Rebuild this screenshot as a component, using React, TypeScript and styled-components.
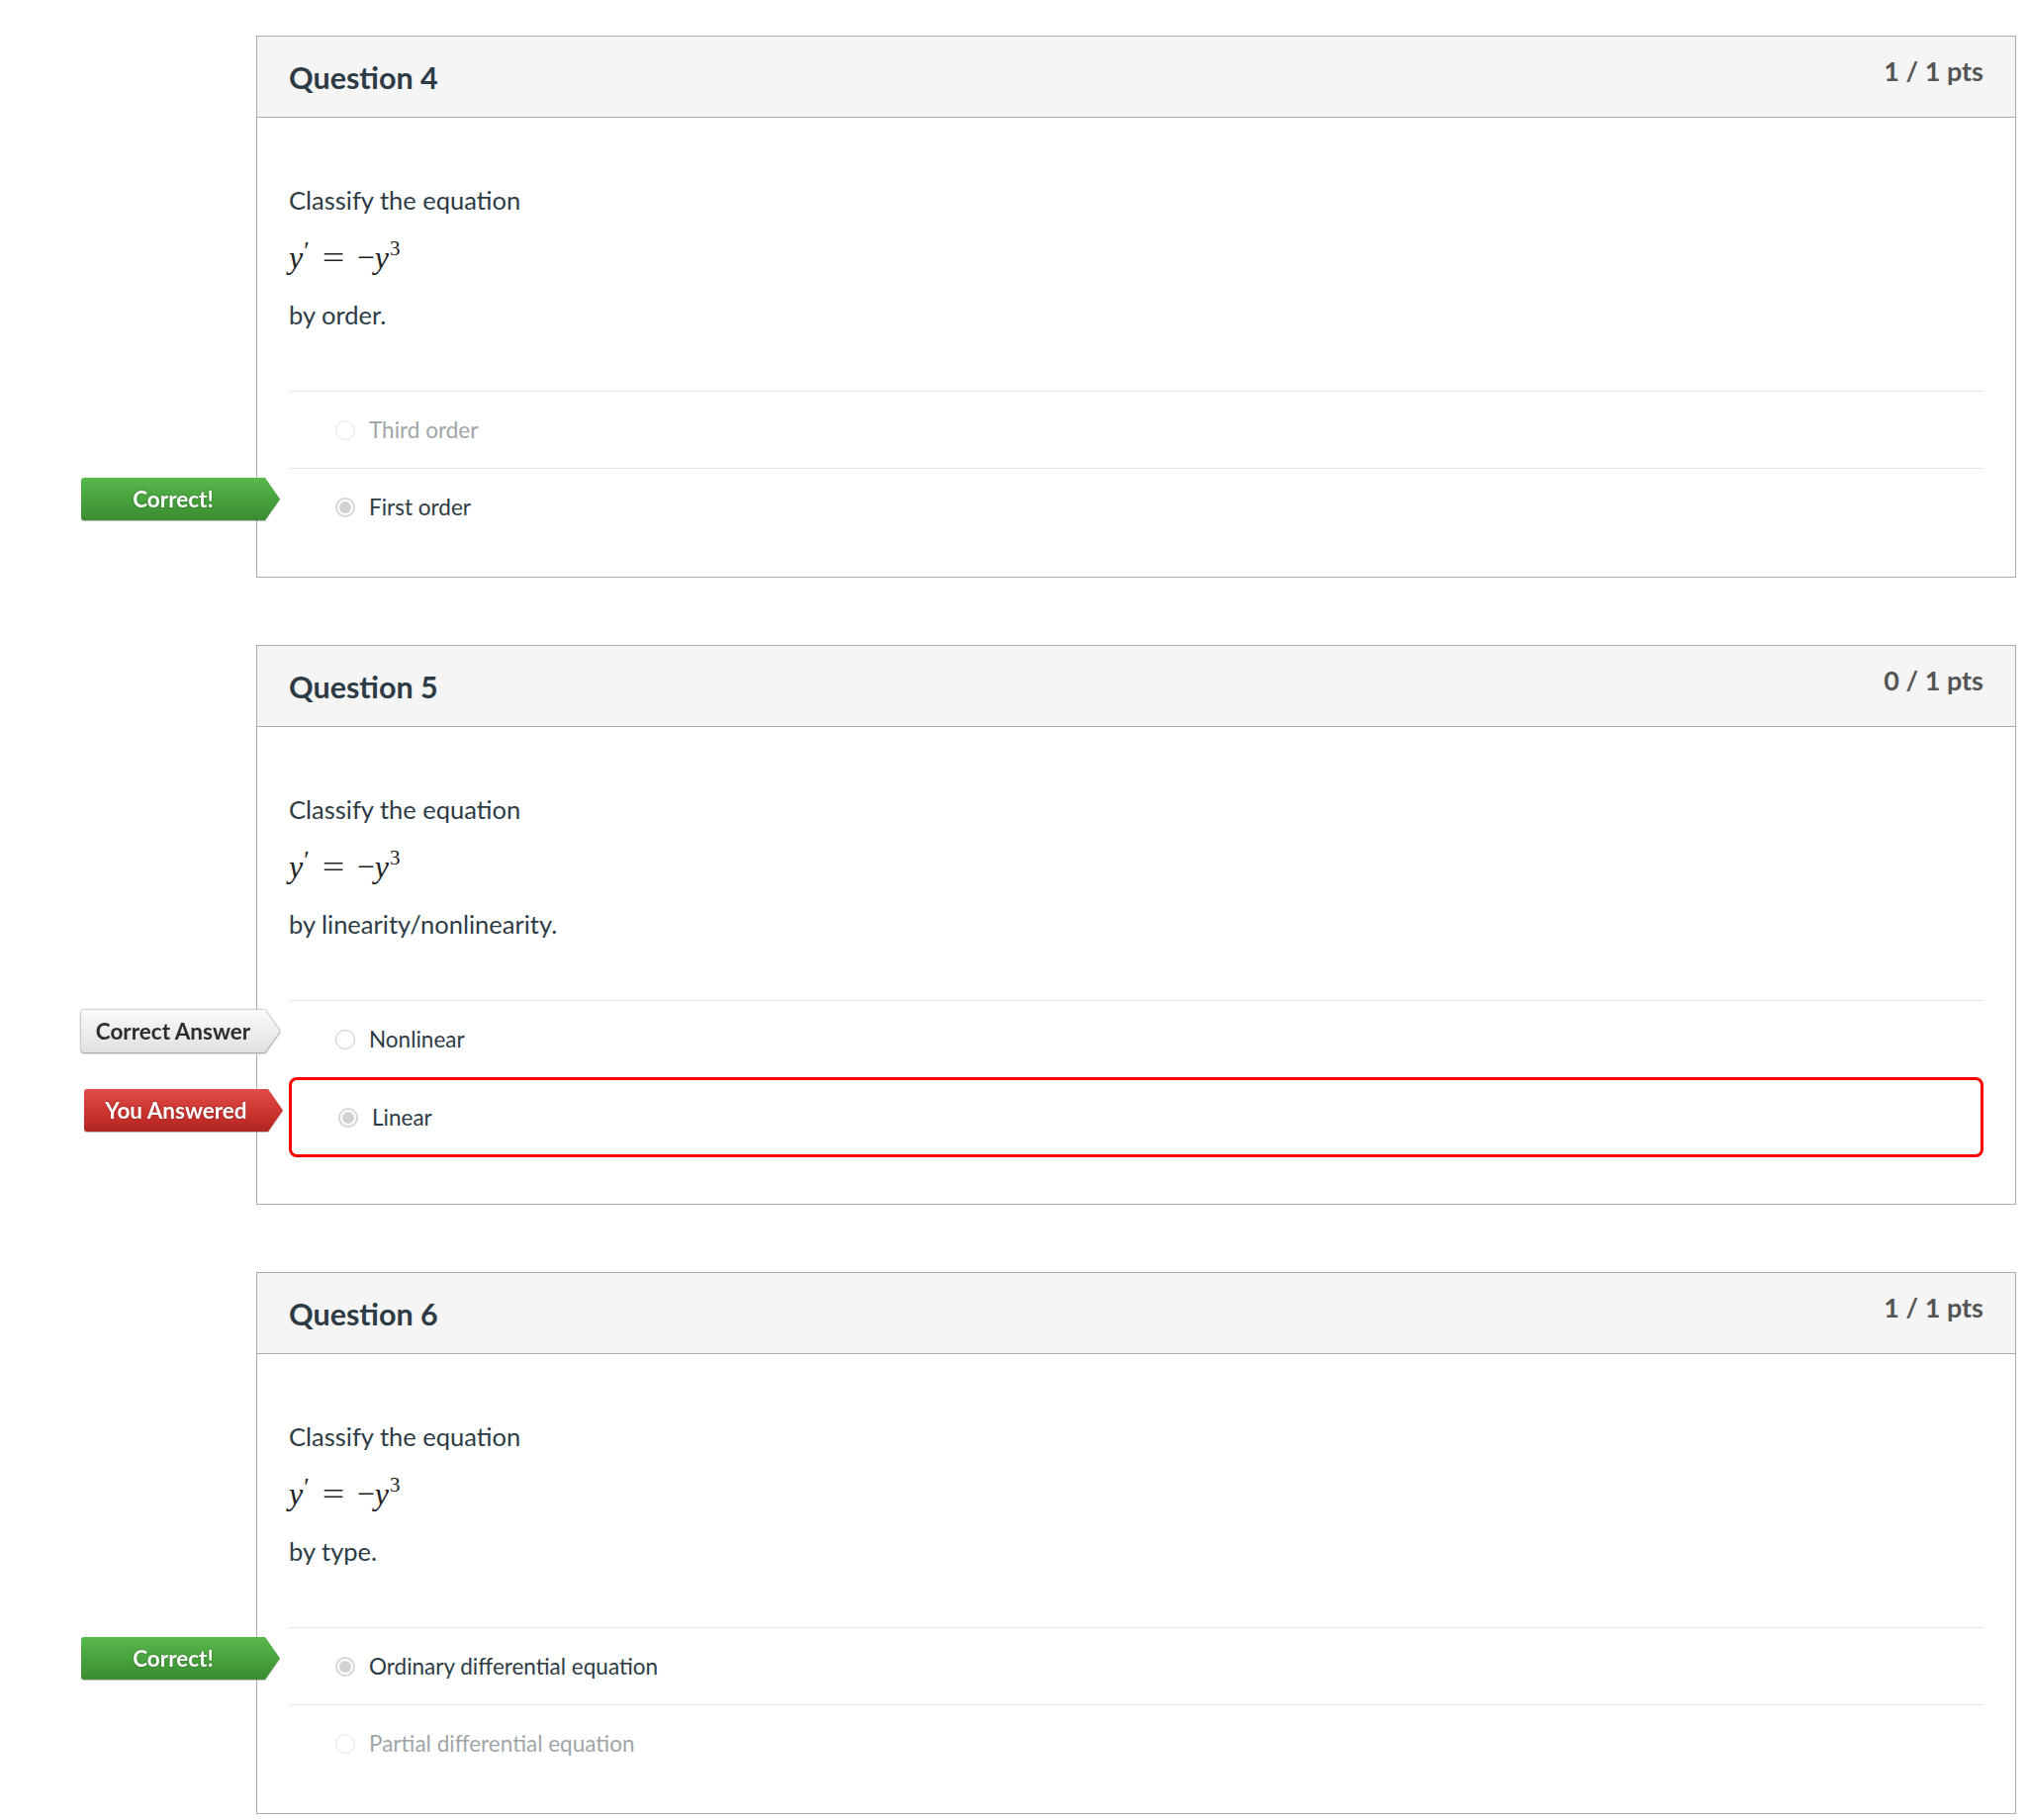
import React from 'react';
import styled, { createGlobalStyle, css } from 'styled-components';

type Answer = {
  text: string;
  state: 'correct' | 'answered' | 'missed' | 'plain';
  selected?: boolean;
  faded?: boolean;
};

type Question = {
  number: number;
  points: string;
  criterion: string;
  answers: Answer[];
};

const questions: Question[] = [
  {
    number: 4,
    points: '1 / 1 pts',
    criterion: 'by order.',
    answers: [
      { text: 'Third order', state: 'plain', faded: true },
      { text: 'First order', state: 'correct', selected: true },
    ],
  },
  {
    number: 5,
    points: '0 / 1 pts',
    criterion: 'by linearity/nonlinearity.',
    answers: [
      { text: 'Nonlinear', state: 'missed' },
      { text: 'Linear', state: 'answered', selected: true },
    ],
  },
  {
    number: 6,
    points: '1 / 1 pts',
    criterion: 'by type.',
    answers: [
      { text: 'Ordinary differential equation', state: 'correct', selected: true },
      { text: 'Partial differential equation', state: 'plain', faded: true },
    ],
  },
];

const badgeLabel = {
  correct: 'Correct!',
  missed: 'Correct Answer',
  answered: 'You Answered',
};

const App = () => {
  return (
    <>
      <GlobalStyle />
      <Page>
        {questions.map((q) => (
          <Card key={q.number}>
            <Header>
              <Title>Question {q.number}</Title>
              <Points>{q.points}</Points>
            </Header>
            <Body>
              <Text>Classify the equation</Text>
              <MathLine>
                <i>y</i>
                <Prime>′</Prime>
                <Op>=</Op>−<i>y</i>
                <Sup>3</Sup>
              </MathLine>
              <Text>{q.criterion}</Text>
              <Answers>
                {q.answers.map((a) => (
                  <Row key={a.text} $wrong={a.state === 'answered'}>
                    {a.state !== 'plain' && (
                      <BadgeWrap $kind={a.state}>
                        <Badge $kind={a.state}>{badgeLabel[a.state]}</Badge>
                      </BadgeWrap>
                    )}
                    <Radio $selected={!!a.selected} $faded={!!a.faded} />
                    <AnswerText $faded={!!a.faded}>{a.text}</AnswerText>
                  </Row>
                ))}
              </Answers>
            </Body>
          </Card>
        ))}
      </Page>
    </>
  );
};

export default App;

const GlobalStyle = createGlobalStyle`
  body {
    margin: 0;
    background: #fff;
    font-family: Lato, "Open Sans", sans-serif;
    color: #2d3b45;
  }
`;

const Page = styled.main`
  display: flex;
  flex-direction: column;
  gap: 68px;
  padding: 36px 0 6px 259px;
`;

const Card = styled.section`
  width: 1779px;
  box-sizing: border-box;
  border: 1px solid #acacac;
  background: #fff;
`;

const Header = styled.header`
  height: 81px;
  display: flex;
  align-items: center;
  justify-content: space-between;
  padding: 0 32px;
  background: #f5f5f5;
  border-bottom: 1px solid #acacac;
`;

const Title = styled.h2`
  margin: 1px 0 0;
  font-size: 30.5px;
  font-weight: 700;
  color: #2d3b45;
`;

const Points = styled.div`
  margin-top: -13px;
  font-size: 27px;
  font-weight: 700;
  color: #555;
`;

const Body = styled.div`
  padding: 64px 32px 32px;
`;

const Text = styled.p`
  margin: 0 0 20px;
  font-size: 25.5px;
  line-height: 38px;
  color: #2d3b45;
  &:last-of-type {
    margin-bottom: 0;
  }
`;

const MathLine = styled.div`
  margin: 0 0 20px;
  height: 38px;
  line-height: 38px;
  font-family: "Liberation Serif", "DejaVu Serif", serif;
  font-size: 32px;
  color: #222;
  white-space: nowrap;
`;

const Prime = styled.span`
  font-size: 25px;
  position: relative;
  top: -9px;
  margin-left: 1px;
`;

const Op = styled.span`
  margin: 0 15px 0 15px;
  display: inline-block;
  transform: scaleX(1.25);
`;

const Sup = styled.sup`
  font-size: 21px;
  margin-left: 1px;
  vertical-align: 0;
  position: relative;
  top: -13px;
`;

const Answers = styled.div`
  margin-top: 58px;
`;

const Row = styled.div<{ $wrong: boolean }>`
  position: relative;
  display: flex;
  align-items: center;
  box-sizing: border-box;
  height: 78px;
  padding-left: 47px;
  border-top: 1px solid #e6e6e6;
  ${(p) =>
    p.$wrong &&
    css`
      height: 81px;
      margin-bottom: 15px;
      border: 3px solid #f00;
      border-radius: 8px;
    `}
`;

const badgeColors = {
  correct: css`
    background: linear-gradient(#58b84d, #429a38 70%, #3b8b33);
    color: #fff;
    text-shadow: 0 0 2px rgba(0, 0, 0, 0.4);
  `,
  missed: css`
    background: linear-gradient(#fbfbfb, #e0e0e0);
    color: #2d2d2d;
  `,
  answered: css`
    background: linear-gradient(#e24b46, #c52f2a 70%, #ad2420);
    color: #fff;
    text-shadow: 0 0 2px rgba(0, 0, 0, 0.4);
  `,
};

const BadgeWrap = styled.div<{ $kind: 'correct' | 'missed' | 'answered' }>`
  position: absolute;
  left: -210px;
  top: 9px;
  filter: ${(p) =>
    p.$kind === 'missed'
      ? 'drop-shadow(0 0 0.8px #8a8a8a) drop-shadow(0 1px 0 #bdbdbd)'
      : 'drop-shadow(0 1px 0 rgba(0,0,0,0.25))'};
`;

const Badge = styled.div<{ $kind: 'correct' | 'missed' | 'answered' }>`
  width: 201px;
  height: 43px;
  box-sizing: border-box;
  padding-right: 15px;
  display: flex;
  align-items: center;
  justify-content: center;
  font-size: 22.5px;
  font-weight: 700;
  border-radius: 3px 0 0 3px;
  clip-path: polygon(0 0, calc(100% - 15px) 0, 100% 50%, calc(100% - 15px) 100%, 0 100%);
  ${(p) => badgeColors[p.$kind]}
`;

const Radio = styled.span<{ $selected: boolean; $faded: boolean }>`
  position: relative;
  width: 20px;
  height: 20px;
  box-sizing: border-box;
  border-radius: 50%;
  border: 1.5px solid ${(p) => (p.$faded ? '#e6e6e6' : '#c9c9c9')};
  background: #fff;
  flex: none;
  ${(p) =>
    p.$selected &&
    css`
      border: 2px solid #d6d6d6;
      &::after {
        content: '';
        position: absolute;
        inset: 2px;
        border-radius: 50%;
        background: #d2d2d2;
      }
    `}
`;

const AnswerText = styled.span<{ $faded: boolean }>`
  margin-left: 14px;
  font-size: 22.5px;
  color: ${(p) => (p.$faded ? '#a0a5a9' : '#2d3b45')};
`;
